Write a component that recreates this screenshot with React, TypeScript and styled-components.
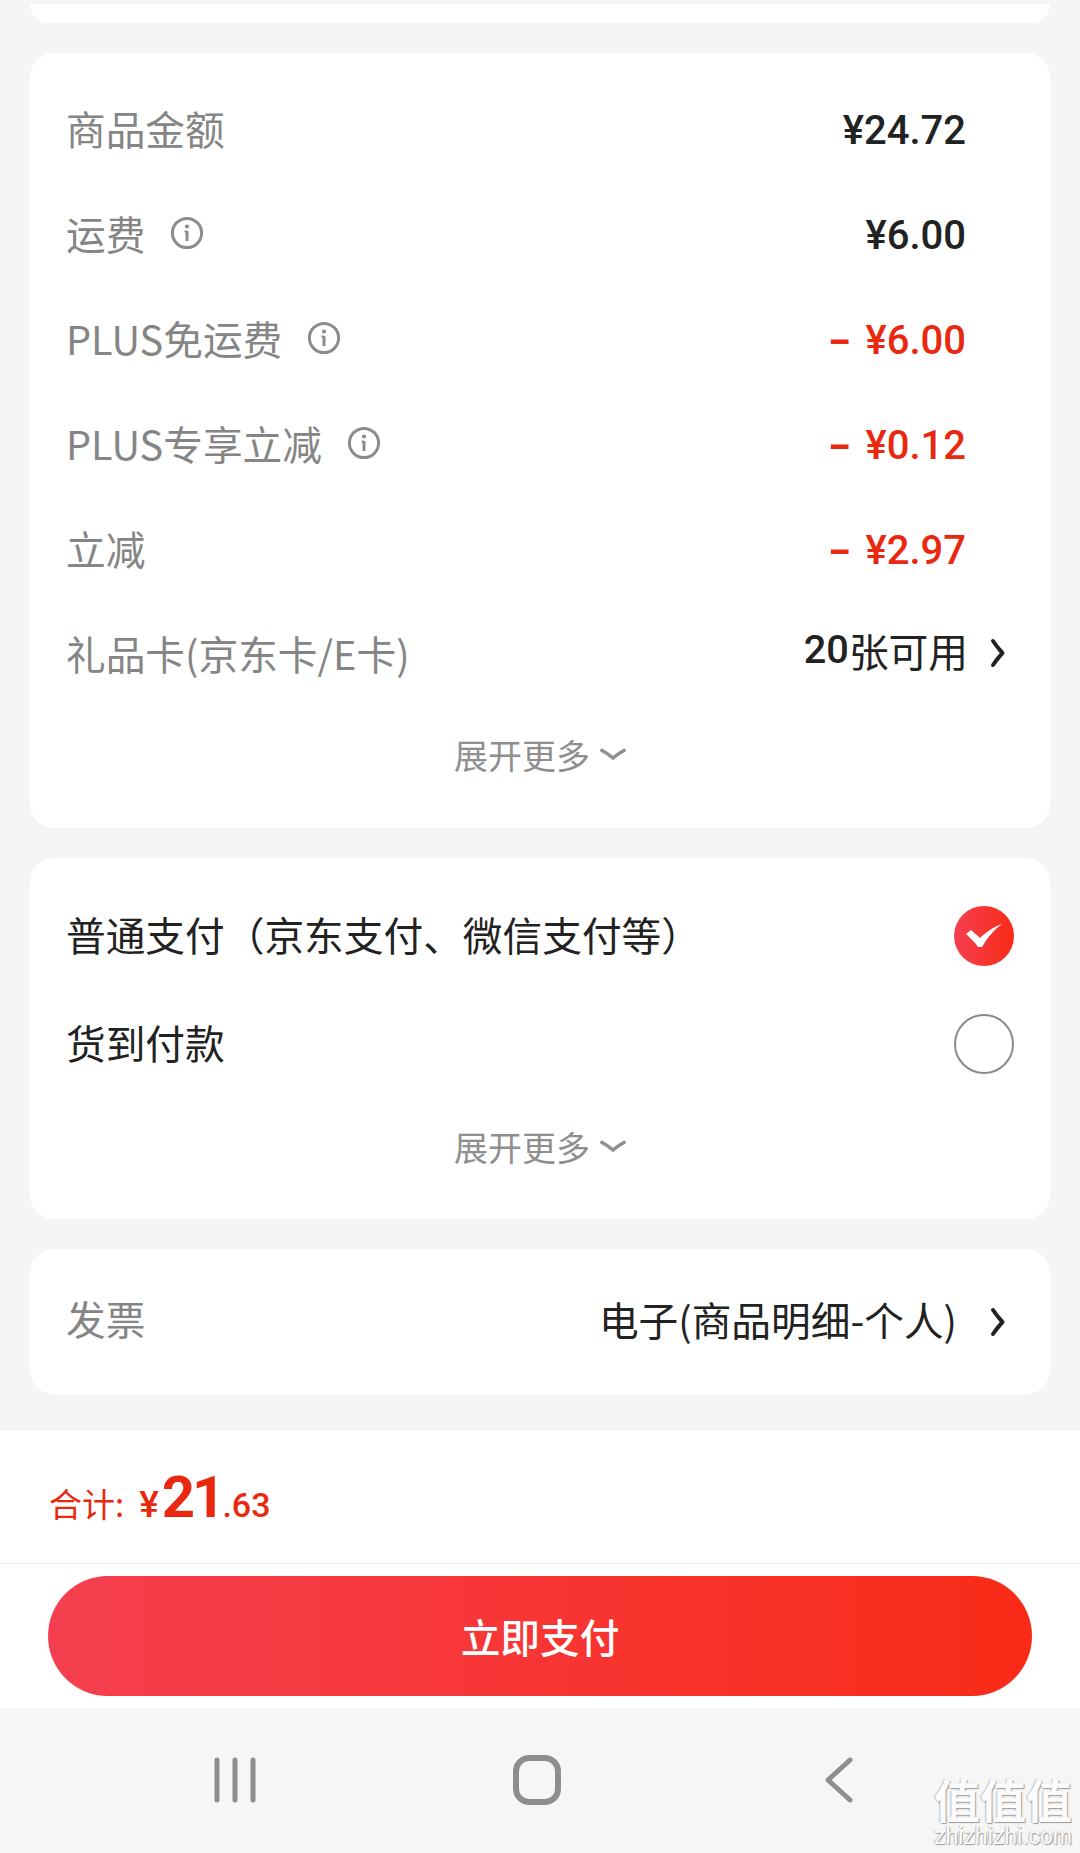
import styled, { createGlobalStyle } from 'styled-components';

const RED = '#e9290f';
const CJK = '"Noto Sans CJK SC", sans-serif';
const NUM = 'Roboto, "Noto Sans CJK SC", sans-serif';

const GlobalStyle = createGlobalStyle`
  html, body {
    margin: 0;
    padding: 0;
    background: #f5f5f5;
  }
  * {
    box-sizing: border-box;
  }
`;

const InfoIcon = () => (
  <InfoSvg viewBox="0 0 34 34" fill="none" stroke="#8c8c8c">
    <circle cx="17" cy="17" r="14.6" strokeWidth="3" />
    <circle cx="17" cy="10.5" r="2.1" fill="#8c8c8c" stroke="none" />
    <path d="M17 15V25" strokeWidth="3" />
    <path d="M14.5 15.5H17" strokeWidth="2" />
  </InfoSvg>
);

const Chevron = () => (
  <ChevronSvg viewBox="0 0 16 30" fill="none" stroke="#222" strokeWidth="4" strokeLinecap="round" strokeLinejoin="round">
    <path d="M3 3C7 9 10 12 12.5 15C10 18 7 21 3 27" />
  </ChevronSvg>
);

const Expand = () => (
  <ExpandRow>
    展开更多
    <ExpandArrow viewBox="0 0 26 13" fill="none" stroke="#8f8f8f" strokeWidth="3.6" strokeLinecap="round">
      <path d="M2 2.5C6 4.5 9.5 7 13 10C16.5 7 20 4.5 24 2.5" />
    </ExpandArrow>
  </ExpandRow>
);

type SummaryRow = {
  label: string;
  value: string;
  info?: boolean;
  discount?: boolean;
};

const summaryRows: SummaryRow[] = [
  { label: '商品金额', value: '¥24.72' },
  { label: '运费', value: '¥6.00', info: true },
  { label: 'PLUS免运费', value: '¥6.00', info: true, discount: true },
  { label: 'PLUS专享立减', value: '¥0.12', info: true, discount: true },
  { label: '立减', value: '¥2.97', discount: true },
];

const App = () => (
  <Page>
    <GlobalStyle />
    <TopCard />
    <Cards>
      <Card>
        <Rows>
          {summaryRows.map((row) => (
            <Row key={row.label}>
              <Label>
                {row.label}
                {row.info && <InfoIcon />}
              </Label>
              <Amount $discount={row.discount}>
                {row.discount && <Dash>-</Dash>}
                {row.value}
              </Amount>
            </Row>
          ))}
          <Row>
            <Label>礼品卡(京东卡/E卡)</Label>
            <LinkValue>
              <strong>20</strong>张可用
              <Chevron />
            </LinkValue>
          </Row>
        </Rows>
        <Expand />
      </Card>

      <PayCard>
        <PayRow>
          <PayLabel>普通支付（京东支付、微信支付等）</PayLabel>
          <CheckedRadio>
            <svg width="38" height="26" viewBox="0 0 38 26">
              <path d="M1 11L6 7L15 15C20 10 28 4 37 1C29 7 22 15 17 24L13 24C10 19 5 15 1 11Z" fill="#fff" />
            </svg>
          </CheckedRadio>
        </PayRow>
        <PayRow>
          <PayLabel>货到付款</PayLabel>
          <EmptyRadio />
        </PayRow>
        <Expand />
      </PayCard>

      <InvoiceCard>
        <Label>发票</Label>
        <InvoiceValue>
          电子(商品明细-个人)
          <Chevron />
        </InvoiceValue>
      </InvoiceCard>
    </Cards>

    <Footer>
      <Total>
        <TotalLabel>合计:</TotalLabel>
        <Yen>¥</Yen>
        <Whole>21</Whole>
        <Cents>.63</Cents>
      </Total>
      <ButtonBar>
        <PayButton>立即支付</PayButton>
      </ButtonBar>
    </Footer>

    <NavBar>
      <NavSlot>
        <svg width="44" height="46" viewBox="0 0 44 46" fill="none" stroke="#8e8e8e" strokeWidth="5" strokeLinecap="round">
          <path d="M4 3V43M22 3V43M40 3V43" />
        </svg>
      </NavSlot>
      <NavSlot>
        <svg width="48" height="50" viewBox="0 0 48 50" fill="none" stroke="#8e8e8e" strokeWidth="6">
          <rect x="3" y="3" width="42" height="44" rx="13" />
        </svg>
      </NavSlot>
      <NavSlot>
        <svg width="30" height="46" viewBox="0 0 30 46" fill="none" stroke="#8e8e8e" strokeWidth="5" strokeLinecap="round" strokeLinejoin="round">
          <path d="M26 3L4 23L26 43" />
        </svg>
      </NavSlot>
    </NavBar>

    <Watermark>
      <WatermarkMark>值值值</WatermarkMark>
      <WatermarkUrl>zhizhizhi.com</WatermarkUrl>
    </Watermark>
  </Page>
);

export default App;

const Page = styled.div`
  position: relative;
  width: 1080px;
  height: 1853px;
  overflow: hidden;
  background: #f5f5f5;
  padding-top: 4px;
  font-family: ${CJK};
`;

const TopCard = styled.div`
  height: 19px;
  margin: 0 30px;
  background: #fff;
  border-radius: 0 0 24px 24px;
`;

const Cards = styled.div`
  display: flex;
  flex-direction: column;
  gap: 30px;
  padding: 30px 30px 37px;
`;

const Card = styled.section`
  height: 775px;
  padding: 26px 36px 0;
  background: #fff;
  border-radius: 24px;
`;

const PayCard = styled(Card)`
  height: 361px;
  padding-top: 24px;
`;

const Rows = styled.div`
  display: flex;
  flex-direction: column;
`;

const Row = styled.div`
  display: flex;
  align-items: center;
  justify-content: space-between;
  height: 105px;
`;

const Label = styled.div`
  display: flex;
  align-items: center;
  gap: 25px;
  padding-bottom: 7px;
  color: #858585;
  font-size: 39.7px;
  line-height: 48px;
`;

const InfoSvg = styled.svg`
  width: 34px;
  height: 34px;
  flex: none;
`;

const Amount = styled.div<{ $discount?: boolean }>`
  margin-right: 48px;
  padding-bottom: 2px;
  color: ${(p) => (p.$discount ? RED : '#222')};
  font-family: ${NUM};
  font-size: 40px;
  font-weight: 500;
`;

const Dash = styled.span`
  display: inline-block;
  margin: 0 18px 0 4px;
  font-weight: 700;
  transform: scaleX(1.6);
`;

const LinkValue = styled.div`
  display: flex;
  align-items: center;
  margin-top: -14px;
  color: #222;
  font-size: 39.7px;
  line-height: 48px;

  strong {
    font-family: ${NUM};
    font-weight: 500;
  }
`;

const ChevronSvg = styled.svg`
  width: 16px;
  height: 30px;
  margin: 6px 8px 0 22px;
`;

const ExpandRow = styled.div`
  display: flex;
  align-items: center;
  justify-content: center;
  gap: 10px;
  height: 98px;
  padding-bottom: 7px;
  color: #8f8f8f;
  font-size: 34px;
`;

const ExpandArrow = styled.svg`
  width: 26px;
  height: 13px;
`;

const PayRow = styled.div`
  display: flex;
  align-items: center;
  justify-content: space-between;
  height: 108px;

  & + ${ExpandRow} {
    padding-bottom: 1px;
  }
`;

const PayLabel = styled.div`
  padding-bottom: 5px;
  color: #222;
  font-size: 39.7px;
  line-height: 48px;
`;

const CheckedRadio = styled.div`
  display: flex;
  align-items: center;
  justify-content: center;
  width: 60px;
  height: 60px;
  border-radius: 50%;
  background: linear-gradient(90deg, #f53f50, #f92b17);
`;

const EmptyRadio = styled.div`
  width: 60px;
  height: 60px;
  border: 2px solid #8a8a8a;
  border-radius: 50%;
`;

const InvoiceCard = styled.section`
  display: flex;
  align-items: center;
  justify-content: space-between;
  height: 145px;
  padding: 0 36px;
  background: #fff;
  border-radius: 24px;
`;

const InvoiceValue = styled.div`
  display: flex;
  align-items: center;
  padding-bottom: 6px;
  color: #222;
  font-size: 39.7px;
  line-height: 48px;

  ${ChevronSvg} {
    margin-left: 33px;
  }
`;

const Footer = styled.footer`
  background: #fff;
`;

const Total = styled.div`
  display: flex;
  align-items: baseline;
  height: 133px;
  padding: 32px 0 0 49px;
  border-bottom: 1px solid #f0f0f0;
  color: ${RED};
`;

const TotalLabel = styled.span`
  font-size: 33px;
  margin-right: 15px;
`;

const Yen = styled.span`
  font-family: ${NUM};
  font-size: 37px;
  font-weight: 500;
  margin-right: 3px;
`;

const Whole = styled.span`
  font-family: ${NUM};
  font-size: 58px;
  font-weight: 700;
  line-height: 68px;
  letter-spacing: -3px;
`;

const Cents = styled.span`
  font-family: ${NUM};
  font-size: 34px;
  font-weight: 500;
`;

const ButtonBar = styled.div`
  height: 144px;
  padding: 12px 48px 0;
`;

const PayButton = styled.button`
  display: block;
  width: 984px;
  height: 120px;
  padding: 0 0 2px;
  border: none;
  border-radius: 60px;
  background: linear-gradient(90deg, #f53f50, #f92b17);
  color: #fff;
  font-family: ${CJK};
  font-size: 39.7px;
  font-weight: 500;
`;

const NavBar = styled.nav`
  display: grid;
  grid-template-columns: repeat(3, 302px);
  justify-content: center;
  align-items: center;
  height: 144px;
  padding-right: 6px;
  background: #f6f6f6;
`;

const NavSlot = styled.div`
  display: flex;
  justify-content: center;
`;

const Watermark = styled.div`
  position: absolute;
  right: 8px;
  bottom: 4px;
  display: flex;
  flex-direction: column;
  align-items: center;
  color: #fbfbfb;
  text-shadow: 1px 1px 1px #9a9a9a, -1px 0 1px #bdbdbd;
`;

const WatermarkMark = styled.div`
  font-size: 46px;
  font-weight: 700;
  line-height: 50px;
`;

const WatermarkUrl = styled.div`
  font-family: "Liberation Sans", sans-serif;
  font-size: 23px;
  line-height: 26px;
`;
